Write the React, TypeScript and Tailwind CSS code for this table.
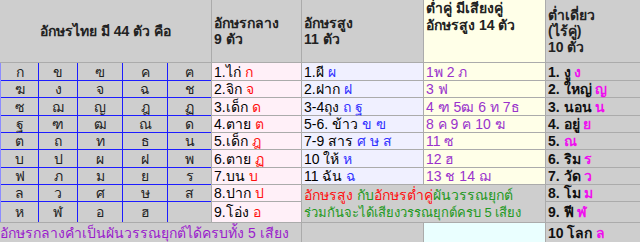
const letters = [
  ["ก", "ข", "ฃ", "ค", "ฅ"],
  ["ฆ", "ง", "จ", "ฉ", "ช"],
  ["ซ", "ฌ", "ญ", "ฎ", "ฏ"],
  ["ฐ", "ฑ", "ฒ", "ณ", "ด"],
  ["ต", "ถ", "ท", "ธ", "น"],
  ["บ", "ป", "ผ", "ฝ", "พ"],
  ["ฟ", "ภ", "ม", "ย", "ร"],
  ["ล", "ว", "ศ", "ษ", "ส"],
  ["ห", "ฬ", "อ", "ฮ", ""],
]

const rowStart = [
  "row-start-1", "row-start-2", "row-start-3", "row-start-4", "row-start-5", "row-start-6",
  "row-start-7", "row-start-8", "row-start-9", "row-start-10", "row-start-11",
]

// อักษรกลาง
const mid = [
  ["1.ไก่", "ก"], ["2.จิก", "จ"], ["3.เด็ก", "ด"], ["4.ตาย", "ต"], ["5.เด็ก", "ฎ"],
  ["6.ตาย", "ฏ"], ["7.บน", "บ"], ["8.ปาก", "ป"], ["9.โอ่ง", "อ"],
]

// อักษรสูง
const high = [
  ["1.ผี", "ผ"], ["2.ฝาก", "ฝ"], ["3-4ถุง", "ถ ฐ"], ["5-6. ข้าว", "ข ฃ"],
  ["7-9 สาร", "ศ ษ ส"], ["10 ให้", "ห"], ["11 ฉัน", "ฉ"],
]

const lowPair = ["1พ 2 ภ", "3 ฟ", "4 ฑ 5ฒ 6 ท 7ธ", "8 ค 9 ฅ 10 ฆ", "11 ซ", "12 ฮ", "13 ช 14 ฌ"]

const lowSingle = [
  ["1.", "งู", "ง"], ["2.", "ใหญ่", "ญ"], ["3.", "นอน", "น"], ["4.", "อยู่", "ย"], ["5.", "", "ณ"],
  ["6.", "ริม", "ร"], ["7.", "วัด", "ว"], ["8.", "โม", "ม"], ["9.", "ฟี", "ฬ"], ["10", "โลก", "ล"],
]

export default function App() {
  return (
    <div className="w-[640px] h-[243px] overflow-hidden bg-white font-['Liberation_Sans',sans-serif] text-[14px] leading-[16px] text-black">
      <div className="grid grid-cols-[211px_89px_121px_121px_94px] grid-rows-[62px_17px_16px_17px_16px_16px_17px_16px_16px_20px_19px] gap-px bg-[#ababab]">
        {/* header */}
        <div className="col-start-1 row-start-1 flex items-center justify-center bg-[#cecece] font-bold text-[#222]">
          อักษรไทย มี 44 ตัว คือ
        </div>
        <div className="col-start-2 row-start-1 flex flex-col justify-center bg-[#cecece] px-[2px] font-bold text-[#222]">
          <span>อักษรกลาง</span>
          <span>9 ตัว</span>
        </div>
        <div className="col-start-3 row-start-1 flex flex-col justify-center bg-[#cecece] px-[2px] font-bold text-[#222]">
          <span>อักษรสูง</span>
          <span>11 ตัว</span>
        </div>
        <div className="col-start-4 row-start-1 flex flex-col bg-[#ffffe8] px-[2px] leading-[17px] font-bold text-[#222]">
          <span>ต่ำคู่ มีเสียงคู่</span>
          <span>อักษรสูง 14 ตัว</span>
        </div>
        <div className="col-start-5 row-start-1 flex flex-col justify-center bg-[#cecece] px-[2px] font-bold text-[#222]">
          <span>ต่ำเดี่ยว</span>
          <span>(ไร้คู่)</span>
          <span>10 ตัว</span>
        </div>

        {/* ตารางพยัญชนะ 44 ตัว */}
        <div className="col-start-1 row-start-2 row-span-9 grid grid-cols-[37px_38px_44px_44px_43px] grid-rows-[17px_16px_17px_16px_16px_17px_16px_16px_20px] gap-px border-l border-[#8c8cff] bg-[#1c1cff]">
          {letters.flat().map((ch, i) => (
            <div key={i} className="flex items-center justify-center bg-[#cecece] text-[#222]">
              {ch}
            </div>
          ))}
        </div>

        {mid.map(([w, l], i) => (
          <div key={"m" + i} className={`col-start-2 ${rowStart[i + 1]} flex items-center whitespace-nowrap bg-[#fff0f8] px-[2px]`}>
            {w}&nbsp;<span className="text-[#ff1010]">{l}</span>
          </div>
        ))}

        {high.map(([w, l], i) => (
          <div key={"h" + i} className={`col-start-3 ${rowStart[i + 1]} flex items-center whitespace-nowrap bg-[#f0f0ff] px-[2px]`}>
            {w}&nbsp;<span className="text-[#3030ff]">{l}</span>
          </div>
        ))}

        {lowPair.map((t, i) => (
          <div key={"p" + i} className={`col-start-4 ${rowStart[i + 1]} flex items-center whitespace-nowrap bg-[#ffffe8] px-[2px] text-[#9933cc]`}>
            {t}
          </div>
        ))}

        <div className="col-start-3 col-span-2 row-start-9 row-span-2 flex flex-col justify-center whitespace-nowrap bg-[#cecece] px-[2px] text-[#229922]">
          <span>
            <span className="text-[#ff1010]">อักษรสูง</span> กับ<span className="text-[#ff1010]">อักษรต่ำคู่</span>ผันวรรณยุกต์
          </span>
          <span className="mt-[2px] text-[13px]">ร่วมกันจะได้เสียงวรรณยุกต์ครบ 5 เสียง</span>
        </div>

        {lowSingle.map(([n, w, l], i) => (
          <div key={"s" + i} className={`col-start-5 ${rowStart[i + 1]} flex items-center whitespace-nowrap bg-[#cecece] px-[2px] font-bold text-[#111]`}>
            {n}&nbsp;{w && <>{w}&nbsp;</>}
            <span className="text-[#ee11ee]">{l}</span>
          </div>
        ))}

        {/* footer */}
        <div className="col-start-1 col-span-2 row-start-11 flex items-center whitespace-nowrap bg-[#cecece] text-[#9a1ccc]">
          อักษรกลางคำเป็นผันวรรณยุกต์ได้ครบทั้ง 5 เสียง
        </div>
        <div className="col-start-3 row-start-11 bg-[#cecece]" />
        <div className="col-start-4 row-start-11 bg-[#eaffff]" />
      </div>
    </div>
  )
}
